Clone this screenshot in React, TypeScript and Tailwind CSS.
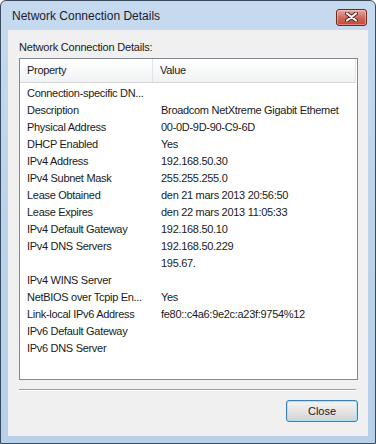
import React from "react";

const rows: [string, string][] = [
  ["Connection-specific DN...", ""],
  ["Description", "Broadcom NetXtreme Gigabit Ethemet"],
  ["Physical Address", "00-0D-9D-90-C9-6D"],
  ["DHCP Enabled", "Yes"],
  ["IPv4 Address", "192.168.50.30"],
  ["IPv4 Subnet Mask", "255.255.255.0"],
  ["Lease Obtained", "den 21 mars 2013 20:56:50"],
  ["Lease Expires", "den 22 mars 2013 11:05:33"],
  ["IPv4 Default Gateway", "192.168.50.10"],
  ["IPv4 DNS Servers", "192.168.50.229"],
  ["", "195.67."],
  ["IPv4 WINS Server", ""],
  ["NetBIOS over Tcpip En...", "Yes"],
  ["Link-local IPv6 Address", "fe80::c4a6:9e2c:a23f:9754%12"],
  ["IPv6 Default Gateway", ""],
  ["IPv6 DNS Server", ""],
];

function CloseGlyph() {
  return (
    <svg width="13" height="10" viewBox="0 0 13 10">
      <path d="M2 1.5 L11 8.5 M11 1.5 L2 8.5" stroke="#5a1e18" strokeWidth="4" strokeLinecap="round" />
      <path d="M2 1.5 L11 8.5 M11 1.5 L2 8.5" stroke="#ffffff" strokeWidth="2.2" strokeLinecap="round" />
    </svg>
  );
}

export default function App() {
  return (
    <div className="w-[376px] h-[444px] bg-white font-['Liberation_Sans',Arial,sans-serif] text-[11px] text-[#1a1a1a]">
      <div className="w-full h-full flex flex-col rounded-t-[6px] border border-[#3b4b5e] bg-gradient-to-b from-[#c6daef] via-[#bcd3eb] to-[#b8d0ea]">
        {/* title bar */}
        <div className="h-[29px] flex items-center pt-[1px] pl-[11px] pr-[8px] shrink-0">
          <span className="text-[12px] text-[#1b1b2b]">Network Connection Details</span>
          <div className="ml-auto w-[31px] h-[17px] mt-[2px] rounded-[3px] border border-[#6e2a22] bg-gradient-to-b from-[#e6aba2] via-[#cf6a5e] to-[#c4473a] flex items-center justify-center shadow-[inset_0_0_0_1px_rgba(255,220,210,0.45)]">
            <CloseGlyph />
          </div>
        </div>

        {/* client area */}
        <div className="mx-[7px] flex-1 bg-[#f0f0f0] flex flex-col pl-[11px] pr-[10px]">
          <div className="pt-[10px] h-[28px] leading-[15px] tracking-[-0.2px]">Network Connection Details:</div>

          <div className="h-[322px] border border-[#828790] bg-white flex flex-col tracking-[-0.3px]">
            <div className="h-[24px] shrink-0 flex border-b border-[#d5d5d5] bg-gradient-to-b from-white to-[#f1f2f4] mr-[1px]">
              <div className="w-[133px] pl-[7px] flex items-center border-r border-[#e3e4e8]">Property</div>
              <div className="flex-1 pl-[7px] flex items-center border-r border-[#e3e4e8]">Value</div>
            </div>
            <div className="pt-[2px] flex flex-col">
              {rows.map(([k, v], i) => (
                <div key={i} className="h-[17px] flex items-center">
                  <div className="w-[134px] pl-[7px] whitespace-nowrap overflow-hidden">{k}</div>
                  <div className="flex-1 pl-[7px] whitespace-nowrap">{v}</div>
                </div>
              ))}
            </div>
          </div>

          <div className="mt-[9px] mr-[2px] h-[2px] border-t border-[#a0a0a0] border-b border-b-white" />

          <div className="mt-[9px] flex justify-end">
            <button className="w-[72px] h-[22px] rounded-[3px] border border-[#3c7fb1] bg-gradient-to-b from-[#f4f4f4] via-[#e5e5e5] to-[#d2d2d2] shadow-[inset_0_0_0_1px_#a9e2f8] text-[11px] text-[#1a1a1a]">
              Close
            </button>
          </div>
        </div>

        {/* bottom frame */}
        <div className="h-[7px] shrink-0" />
      </div>
    </div>
  );
}
